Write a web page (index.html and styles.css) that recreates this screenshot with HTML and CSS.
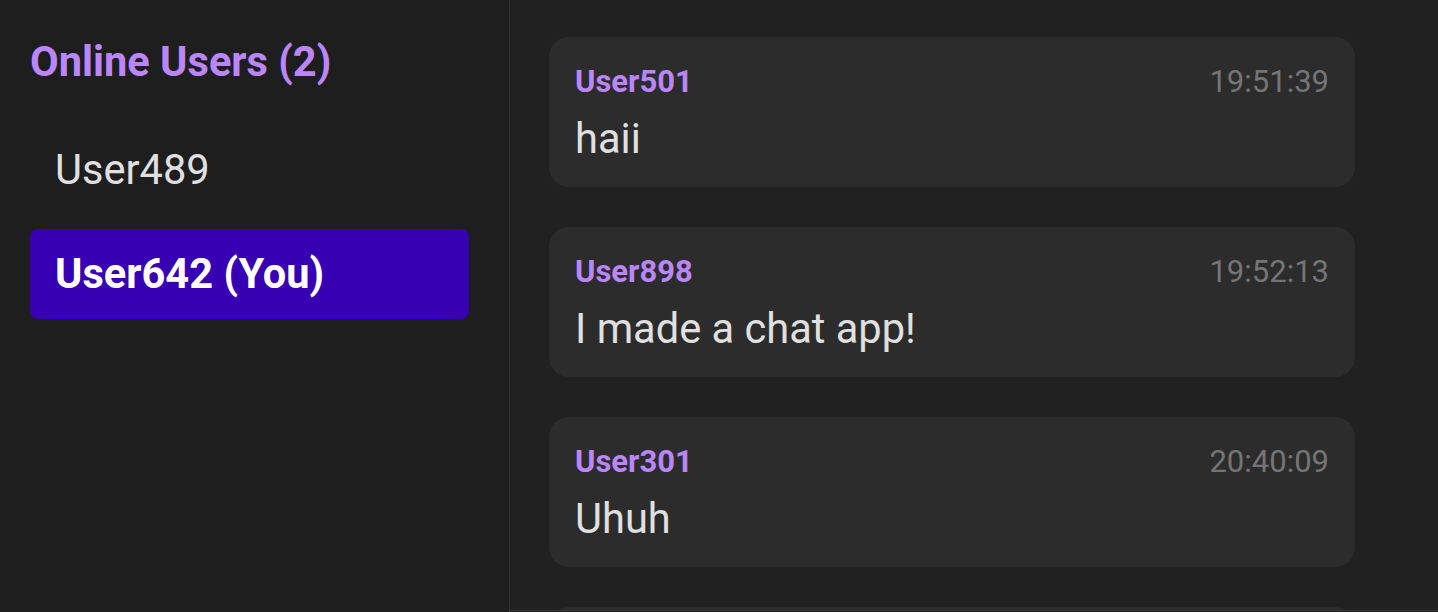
FILE: index.html
```html
<!DOCTYPE html>
<html lang="en">
<head>
<meta charset="utf-8">
<title>Chat</title>
<link rel="stylesheet" href="styles.css">
</head>
<body>
<div class="app">
  <aside class="sidebar">
    <h2 class="sidebar-title">Online Users (2)</h2>
    <ul class="user-list">
      <li class="user-item">User489</li>
      <li class="user-item user-item--me">User642 (You)</li>
    </ul>
  </aside>
  <main class="chat">
    <div class="messages">
      <div class="message">
        <div class="message-head">
          <span class="message-user">User501</span>
          <span class="message-time">19:51:39</span>
        </div>
        <div class="message-text">haii</div>
      </div>
      <div class="message">
        <div class="message-head">
          <span class="message-user">User898</span>
          <span class="message-time">19:52:13</span>
        </div>
        <div class="message-text">I made a chat app!</div>
      </div>
      <div class="message">
        <div class="message-head">
          <span class="message-user">User301</span>
          <span class="message-time">20:40:09</span>
        </div>
        <div class="message-text">Uhuh</div>
      </div>
      <div class="message"></div>
    </div>
    <div class="composer"></div>
  </main>
</div>
</body>
</html>
```

FILE: styles.css
```css
* { box-sizing: border-box; }

html, body {
  margin: 0;
  padding: 0;
  height: 612px;
  overflow: hidden;
  background: #212121;
  font-family: Roboto, "Noto Sans", sans-serif;
}

.app {
  display: flex;
  height: 612px;
}

.sidebar {
  width: 510px;
  flex: none;
  background: #1e1e1e;
  border-right: 1px solid #333333;
  padding: 37px 40px 0 30px;
}

.sidebar-title {
  margin: 0 0 38px 0;
  font-size: 41.6px;
  line-height: 1.2;
  font-weight: 700;
  color: #bb86fc;
}

.user-list {
  list-style: none;
  margin: 0;
  padding: 0;
  display: flex;
  flex-direction: column;
  gap: 14px;
}

.user-item {
  height: 90px;
  display: flex;
  align-items: center;
  padding: 0 25px;
  border-radius: 8px;
  font-size: 41.6px;
  color: #e0e0e0;
}

.user-item--me {
  background: #3700b3;
  color: #ffffff;
  font-weight: 700;
}

.chat {
  flex: 1;
  display: flex;
  flex-direction: column;
  min-width: 0;
}

.messages {
  height: 610px;
  flex: none;
  overflow: hidden;
  padding: 37px 83px 0 39px;
  display: flex;
  flex-direction: column;
  gap: 40px;
}

.message {
  flex: none;
  height: 150px;
  background: #2c2c2c;
  border-radius: 20px;
  padding: 26px 26px 24px 26px;
}

.message-head {
  display: flex;
  justify-content: space-between;
  align-items: baseline;
  margin-bottom: 14px;
}

.message-user {
  font-size: 31px;
  line-height: 1.2;
  font-weight: 700;
  color: #bb86fc;
}

.message-time {
  font-size: 31px;
  line-height: 1.2;
  color: #757575;
}

.message-text {
  font-size: 41.6px;
  line-height: 1.2;
  color: #e0e0e0;
}

.composer {
  flex: 1;
  border-top: 1px solid #333333;
  background: #212121;
}
```
